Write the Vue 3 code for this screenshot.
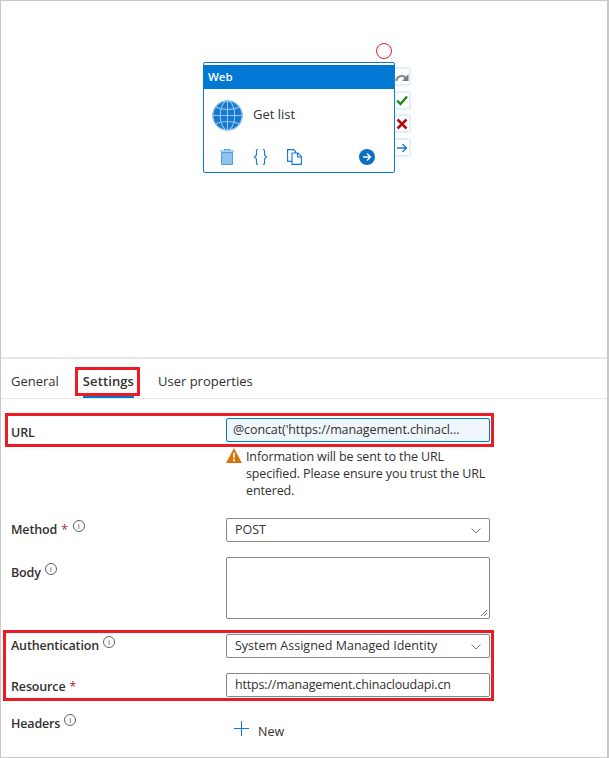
<script setup>
const ports = ['skip', 'ok', 'fail', 'done']
</script>

<template>
  <div class="page">
    <section class="canvas">
      <span class="ring"></span>
      <div class="ports">
        <div v-for="p in ports" :key="p" class="port">
          <svg v-if="p === 'skip'" width="14" height="12" viewBox="0 0 14 12"><path d="M1.200 10c.6-5 6.800-7 10-2.500" fill="none" stroke="#8a8a8a" stroke-width="2.200" /><path d="M13.500 3v7H7z" fill="#7c7c7c" /></svg>
          <svg v-else-if="p === 'ok'" width="12" height="12" viewBox="0 0 12 12"><path d="M1 6.500 4.500 10 11 2.500" fill="none" stroke="#1c8a1c" stroke-width="2.400" /></svg>
          <svg v-else-if="p === 'fail'" width="12" height="12" viewBox="0 0 12 12"><path d="m1.500 1.500 9 9M10.500 1.500l-9 9" fill="none" stroke="#b01010" stroke-width="2.600" /></svg>
          <svg v-else width="12" height="12" viewBox="0 0 12 12"><path d="M1 6h9.500M6.500 2l4 4-4 4" fill="none" stroke="#1f78c8" stroke-width="1.300" /></svg>
        </div>
      </div>
      <div class="node">
        <div class="node-head">Web</div>
        <div class="node-body">
          <svg class="globe" width="31" height="31" viewBox="0 0 32 32">
            <circle cx="16" cy="16" r="15.500" fill="#1878d0" />
            <g fill="none" stroke="#93c6f2" stroke-width="1.100">
              <circle cx="16" cy="16" r="15" />
              <ellipse cx="16" cy="16" rx="7.500" ry="15" />
              <path d="M16 1v30M1 16h30M4 7.500c7 3 17 3 24 0M4 24.500c7-3 17-3 24 0" />
            </g>
          </svg>
          <span class="node-name">Get list</span>
        </div>
        <div class="node-tools">
          <svg width="14" height="16" viewBox="0 0 14 16"><path d="M0 2h14M4.500 2V.5h5V2" fill="none" stroke="#5ba7e4" stroke-width="1.200" /><path d="M1.500 3.500h11v12h-11z" fill="#8fc3ee" stroke="#4a9fe2" /></svg>
          <svg width="15" height="16" viewBox="0 0 15 16" fill="none" stroke="#0f78d4" stroke-width="1.100"><path d="M5 .5C2.800.5 3.500 3 3.500 5S3 7.500 1 8c2 .5 2.500 1 2.500 3S2.800 15.500 5 15.500M10 .5c2.200 0 1.500 2.500 1.500 4.500s.5 2.500 2.500 3c-2 .5-2.500 1-2.500 3s.7 4.500-1.500 4.500" /></svg>
          <svg width="15" height="16" viewBox="0 0 15 16" fill="#fff" stroke="#0f78d4" stroke-width="1.100"><path d="M.6.600h6l2 2v9.800H.6z" /><path d="M5 4h6l3.400 3.400v8H5z" /><path d="M10.500 4v4h4" fill="none" /></svg>
          <svg class="go" width="16" height="16" viewBox="0 0 16 16"><circle cx="8" cy="8" r="8" fill="#0b6fc6" /><path d="M4 8h7.500M8 4.500 11.500 8 8 11.500" fill="none" stroke="#fff" stroke-width="1.400" /></svg>
        </div>
      </div>
    </section>

    <section class="panel">
      <nav class="tabs">
        <span class="tab">General</span>
        <span class="tab active">Settings</span>
        <span class="tab">User properties</span>
      </nav>

      <div class="form">
        <div class="row row-url">
          <label class="lab">URL</label>
          <div class="field">
            <div class="input focus">@concat('https://management.chinacl...</div>
            <div class="warn">
              <svg width="16" height="15" viewBox="0 0 17 16"><path d="M8.500 0 17 16H0z" fill="#d9730d" /><path d="M7.500 5h2l-.3 6h-1.400zM7.500 12h2v2h-2z" fill="#fff" /></svg>
              <p>Information will be sent to the URL specified. Please ensure you trust the URL entered.</p>
            </div>
          </div>
        </div>

        <div class="row row-method">
          <label class="lab">Method <i class="req">*</i><span class="info">i</span></label>
          <div class="field">
            <div class="input select">POST<svg class="chev" width="10" height="6" viewBox="0 0 10 6"><path d="m.5.500 4.500 4.500L9.500.500" fill="none" stroke="#777" /></svg></div>
          </div>
        </div>

        <div class="row row-body">
          <label class="lab">Body<span class="info">i</span></label>
          <div class="field">
            <div class="input area">
              <svg class="grip" width="8" height="8" viewBox="0 0 8 8"><path d="M7 1 1 7M7 4 4 7" stroke="#666" /></svg>
            </div>
          </div>
        </div>

        <div class="row row-auth">
          <label class="lab">Authentication<span class="info">i</span></label>
          <div class="field">
            <div class="input select">System Assigned Managed Identity<svg class="chev" width="10" height="6" viewBox="0 0 10 6"><path d="m.5.500 4.500 4.500L9.500.500" fill="none" stroke="#777" /></svg></div>
          </div>
        </div>

        <div class="row row-res">
          <label class="lab">Resource <i class="req">*</i></label>
          <div class="field">
            <div class="input resource">https://management.chinacloudapi.cn</div>
          </div>
        </div>

        <div class="row row-head">
          <label class="lab">Headers<span class="info">i</span></label>
          <div class="field new">
            <svg width="15" height="15" viewBox="0 0 15 15"><path d="M7.500 0v15M0 7.500h15" stroke="#0f78d4" /></svg>
            <span class="new-text">New</span>
          </div>
        </div>
      </div>

      <span class="mark mark-tab"></span>
      <span class="mark mark-url"></span>
      <span class="mark mark-auth"></span>
    </section>
  </div>
</template>

<style scoped>
.page {
  width: 609px;
  height: 758px;
  box-sizing: border-box;
  border-top: 1px solid #c8c8c8;
  border-left: 1px solid #c8c8c8;
  border-right: 2px solid #c8c8c8;
  border-bottom: 1px solid #c8c8c8;
  font-family: "Open Sans", "Noto Sans", sans-serif;
  font-size: 12.5px;
  color: #323130;
  background: #fff;
  display: flex;
  flex-direction: column;
  overflow: hidden;
}
.canvas {
  position: relative;
  box-sizing: border-box;
  height: 358px;
  flex: none;
  border-bottom: 2px solid #e6e6e6;
}
.ring {
  position: absolute;
  left: 375px;
  top: 42px;
  width: 14px;
  height: 14px;
  border: 1px solid #ed1c24;
  border-radius: 50%;
}
.node {
  position: absolute;
  left: 202px;
  top: 61px;
  width: 190px;
  box-sizing: content-box;
  height: 107px;
  padding-top: 2px;
  border: 1px solid #0f78d4;
  border-radius: 2px;
  display: flex;
  flex-direction: column;
  background: #fff;
}
.node-head {
  height: 24px;
  flex: none;
  background: #0078d4;
  color: #fff;
  font-weight: 600;
  font-size: 11.500px;
  line-height: 24px;
  padding-left: 4px;
}
.node-body {
  display: flex;
  align-items: center;
  flex: none;
  height: 52px;
  padding-left: 8px;
  gap: 10px;
}
.node-name {
  font-size: 13px;
  margin-top: -2px;
}
.node-tools {
  display: flex;
  align-items: center;
  flex: none;
  height: 32px;
  padding-left: 16px;
  padding-right: 19px;
  gap: 19px;
}
.go { margin-left: auto; }
.ports {
  position: absolute;
  left: 394px;
  top: 68px;
  display: flex;
  flex-direction: column;
  gap: 8.700px;
}
.port {
  width: 14px;
  height: 15px;
  background: #fff;
  box-shadow: 0 0 3px 1px #c4dff6;
  display: flex;
  align-items: center;
  justify-content: center;
}
.panel {
  position: relative;
  flex: 1;
}
.tabs {
  height: 40px;
  border-bottom: 1px solid #e8e8e8;
  display: flex;
  gap: 24px;
  padding-left: 10px;
  box-sizing: border-box;
  font-size: 13px;
}
.tab {
  position: relative;
  box-sizing: border-box;
  height: 39px;
  padding-top: 6px;
  line-height: 33px;
}
.tab.active {
  font-weight: 600;
  letter-spacing: 0.1px;
}
.tab.active::after {
  content: "";
  position: absolute;
  left: 0;
  right: 0;
  bottom: 0;
  height: 2px;
  background: #0078d4;
}
.form { padding-left: 10px; }
.row { display: flex; }
.lab {
  width: 215px;
  flex: none;
  font-weight: 600;
  display: block;
  line-height: 18px;
  letter-spacing: -0.15px;
}
.field { width: 264px; flex: none; }
.req {
  color: #a4262c;
  font-style: normal;
  font-weight: 400;
  font-size: 12px;
  margin-left: 1px;
}
.req + .info { margin-left: 5px; }
.info {
  display: inline-flex;
  align-items: center;
  justify-content: center;
  box-sizing: border-box;
  width: 12px;
  height: 12px;
  margin-left: 4px;
  border: 1px solid #605e5c;
  border-radius: 50%;
  font-size: 8px;
  font-weight: 400;
  line-height: 1;
  vertical-align: 5px;
}
.input {
  box-sizing: border-box;
  height: 24px;
  border: 1px solid #8a8886;
  border-radius: 2px;
  padding-left: 8px;
  line-height: 22px;
  position: relative;
  white-space: nowrap;
}
.input.focus {
  border-color: #0078d4;
  background: #eff6fc;
  padding-left: 6px;
  letter-spacing: -0.1px;
}
.input.resource { letter-spacing: -0.17px; }
.select .chev {
  position: absolute;
  right: 8px;
  top: 9px;
}
.input.area {
  height: 62px;
}
.grip {
  position: absolute;
  right: 1px;
  bottom: 1px;
}
.row-url { padding-top: 19px; }
.row-url .lab { padding-top: 6px; }
.warn {
  display: flex;
  gap: 4px;
  margin-top: 6px;
}
.warn svg { flex: none; }
.warn p {
  margin: 0;
  line-height: 17px;
  width: 244px;
  letter-spacing: -0.12px;
}
.row-method { margin-top: 19px; }
.row-method .lab { padding-top: 2px; }
.row-body { margin-top: 15px; }
.row-body .lab { padding-top: 6px; }
.row-auth { margin-top: 15px; }
.row-auth .lab { padding-top: 2px; }
.row-res { margin-top: 15px; }
.row-res .lab { padding-top: 5px; }
.row-head { margin-top: 17px; }
.row-head .lab { padding-top: 0; }
.new {
  display: flex;
  align-items: flex-start;
  align-self: flex-start;
  gap: 9px;
  padding-left: 8px;
  padding-top: 7px;
  box-sizing: border-box;
}
.new-text {
  line-height: 17px;
  margin-top: 1.500px;
}
.mark {
  position: absolute;
  border: 3px solid #ed1c24;
  box-sizing: border-box;
}
.mark-tab { left: 74px; top: 8px; width: 65px; height: 29px; }
.mark-url { left: 4px; top: 54px; width: 489px; height: 34px; }
.mark-auth { left: 2px; top: 271px; width: 491px; height: 71px; }
</style>
